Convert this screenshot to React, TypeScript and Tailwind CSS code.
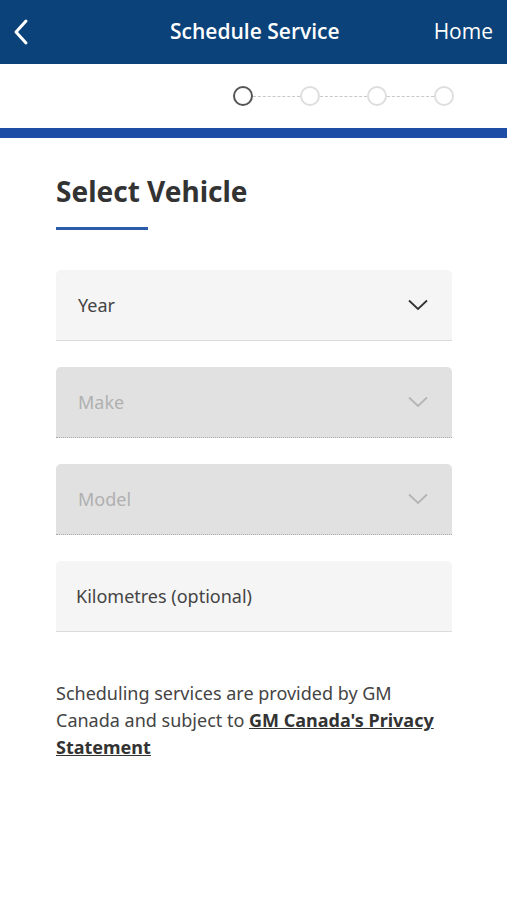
import React from 'react'

const FONT = { fontFamily: '"Noto Sans", "Open Sans", sans-serif' }

function Chevron({ muted }: { muted?: boolean }) {
  return (
    <svg width="20" height="12" viewBox="0 0 20 12" fill="none" stroke={muted ? '#b5b5b5' : '#333'} strokeWidth="1.8">
      <polyline points="1,1.5 10,10 19,1.5" />
    </svg>
  )
}

function SelectField({ label, disabled }: { label: string; disabled?: boolean }) {
  return (
    <div
      className={`h-[71px] flex items-center justify-between pl-[22px] pr-[24px] rounded-t-[5px] ${
        disabled ? 'bg-[#e1e1e1] border-b border-dotted border-[#a9a9a9]' : 'bg-[#f5f5f5] border-b border-[#dcdcdc]'
      }`}
    >
      <span className={`text-[18px] ${disabled ? 'text-[#b0b0b0]' : 'text-[#444]'}`}>{label}</span>
      <Chevron muted={disabled} />
    </div>
  )
}

export default function App() {
  return (
    <div className="w-[507px] h-[900px] bg-white" style={FONT}>
      {/* Nav bar */}
      <div className="h-16 bg-[#0a4279] flex items-center justify-between pl-[12px] pr-[14px] text-white">
        <svg width="18" height="28" viewBox="0 0 18 28" fill="none" stroke="white" strokeWidth="3" strokeLinecap="round" strokeLinejoin="round">
          <polyline points="14,3 4,14 14,25" />
        </svg>
        <span className="text-[21px] font-semibold ml-[46px]" style={{ fontFamily: '"Open Sans", sans-serif' }}>Schedule Service</span>
        <span className="text-[21px]" style={{ fontFamily: '"Open Sans", sans-serif' }}>Home</span>
      </div>

      {/* Stepper */}
      <div className="h-[74px] flex items-center justify-end pr-[53px] border-b-[10px] border-[#1d4da4]">
        <div className="flex items-center">
          <div className="w-[20px] h-[20px] rounded-full border-2 border-[#555]" />
          <div className="w-[47px] border-t border-dashed border-[#c8c8c8]" />
          <div className="w-[20px] h-[20px] rounded-full border-2 border-[#dedede]" />
          <div className="w-[47px] border-t border-dashed border-[#c8c8c8]" />
          <div className="w-[20px] h-[20px] rounded-full border-2 border-[#dedede]" />
          <div className="w-[47px] border-t border-dashed border-[#c8c8c8]" />
          <div className="w-[20px] h-[20px] rounded-full border-2 border-[#dedede]" />
        </div>
      </div>

      <div className="px-[56px] pt-[34px] pr-[55px]">
        <h1 className="text-[28px] font-bold text-[#333] leading-[38px]">Select Vehicle</h1>
        <div className="w-[92px] h-[3px] bg-[#2b5ca9] mt-[17px]" />

        <div className="mt-[40px] flex flex-col gap-[26px]">
          <SelectField label="Year" />
          <SelectField label="Make" disabled />
          <SelectField label="Model" disabled />
          <div className="h-[71px] flex items-center pl-[20px] bg-[#f5f5f5] border-b border-[#dcdcdc] rounded-t-[5px]">
            <span className="text-[18px] text-[#444]">Kilometres (optional)</span>
          </div>
        </div>

        <p className="mt-[48px] text-[18px] leading-[27px] text-[#444]">
          Scheduling services are provided by GM Canada and subject to{' '}
          <a className="font-bold underline text-[#333]">GM Canada's Privacy Statement</a>
        </p>
      </div>
    </div>
  )
}
